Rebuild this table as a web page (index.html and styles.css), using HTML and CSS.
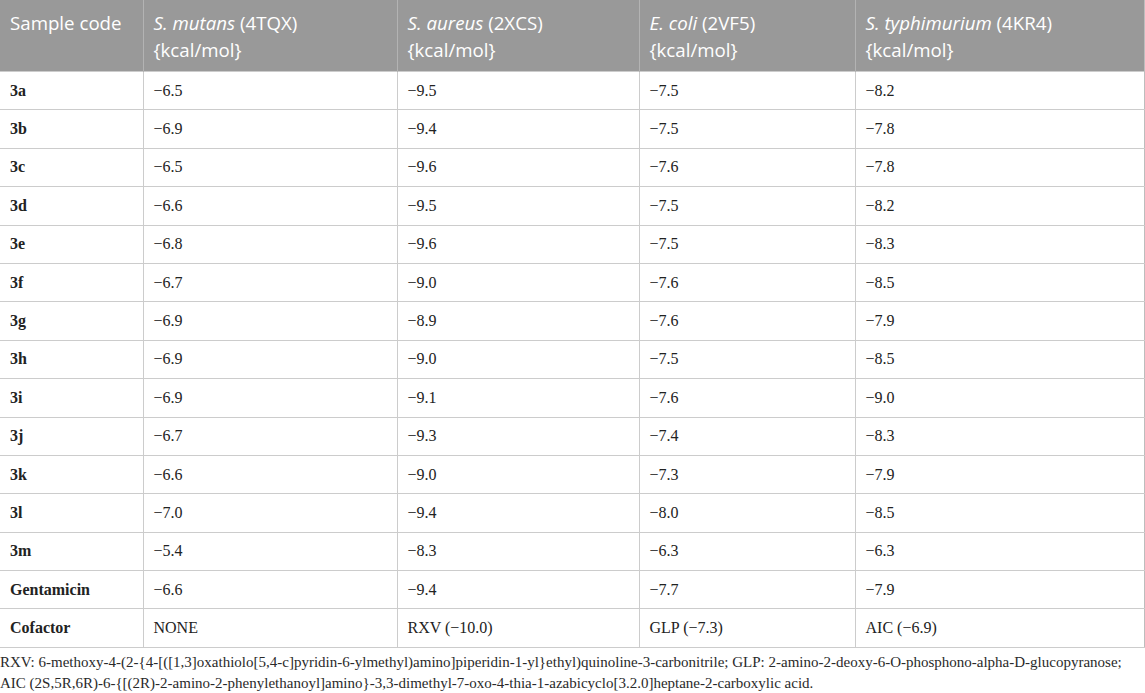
FILE: index.html
```html
<!DOCTYPE html>
<html>
<head>
<meta charset="utf-8">
<link rel="stylesheet" href="styles.css">
</head>
<body>
<div class="wrap">
<table class="data">
<colgroup>
<col class="c1"><col class="c2"><col class="c3"><col class="c4"><col class="c5">
</colgroup>
<thead>
<tr>
<th>Sample code</th>
<th><i>S. mutans</i> (4TQX)<br>{kcal/mol}</th>
<th><i>S. aureus</i> (2XCS)<br>{kcal/mol}</th>
<th><i>E. coli</i> (2VF5)<br>{kcal/mol}</th>
<th><i>S. typhimurium</i> (4KR4)<br>{kcal/mol}</th>
</tr>
</thead>
<tbody>
<tr><td class="k">3a</td><td>−6.5</td><td>−9.5</td><td>−7.5</td><td>−8.2</td></tr>
<tr><td class="k">3b</td><td>−6.9</td><td>−9.4</td><td>−7.5</td><td>−7.8</td></tr>
<tr><td class="k">3c</td><td>−6.5</td><td>−9.6</td><td>−7.6</td><td>−7.8</td></tr>
<tr><td class="k">3d</td><td>−6.6</td><td>−9.5</td><td>−7.5</td><td>−8.2</td></tr>
<tr><td class="k">3e</td><td>−6.8</td><td>−9.6</td><td>−7.5</td><td>−8.3</td></tr>
<tr><td class="k">3f</td><td>−6.7</td><td>−9.0</td><td>−7.6</td><td>−8.5</td></tr>
<tr><td class="k">3g</td><td>−6.9</td><td>−8.9</td><td>−7.6</td><td>−7.9</td></tr>
<tr><td class="k">3h</td><td>−6.9</td><td>−9.0</td><td>−7.5</td><td>−8.5</td></tr>
<tr><td class="k">3i</td><td>−6.9</td><td>−9.1</td><td>−7.6</td><td>−9.0</td></tr>
<tr><td class="k">3j</td><td>−6.7</td><td>−9.3</td><td>−7.4</td><td>−8.3</td></tr>
<tr><td class="k">3k</td><td>−6.6</td><td>−9.0</td><td>−7.3</td><td>−7.9</td></tr>
<tr><td class="k">3l</td><td>−7.0</td><td>−9.4</td><td>−8.0</td><td>−8.5</td></tr>
<tr><td class="k">3m</td><td>−5.4</td><td>−8.3</td><td>−6.3</td><td>−6.3</td></tr>
<tr><td class="k">Gentamicin</td><td>−6.6</td><td>−9.4</td><td>−7.7</td><td>−7.9</td></tr>
<tr><td class="k">Cofactor</td><td>NONE</td><td>RXV (−10.0)</td><td>GLP (−7.3)</td><td>AIC (−6.9)</td></tr>
</tbody>
</table>
<p class="note">RXV: 6-methoxy-4-(2-{4-[([1,3]oxathiolo[5,4-c]pyridin-6-ylmethyl)amino]piperidin-1-yl}ethyl)quinoline-3-carbonitrile; GLP: 2-amino-2-deoxy-6-O-phosphono-alpha-D-glucopyranose;<br>AIC (2S,5R,6R)-6-{[(2R)-2-amino-2-phenylethanoyl]amino}-3,3-dimethyl-7-oxo-4-thia-1-azabicyclo[3.2.0]heptane-2-carboxylic acid.</p>
</div>
</body>
</html>
```

FILE: styles.css
```css
html, body {
  margin: 0;
  padding: 0;
  background: #ffffff;
}
.wrap {
  width: 1145px;
}
.data {
  width: 1144px;
  border-collapse: collapse;
  table-layout: fixed;
}
.c1 { width: 143px; }
.c2 { width: 254px; }
.c3 { width: 242px; }
.c4 { width: 216px; }
.c5 { width: 289px; }
.data th {
  background: #999999;
  color: #ffffff;
  font-family: "Open Sans", sans-serif;
  font-weight: normal;
  font-size: 18.7px;
  line-height: 27px;
  text-align: left;
  vertical-align: top;
  padding: 9px 10px 8px 10px;
  height: 54px;
  border-left: 1px solid #b3b3b3;
  border-right: 1px solid #b3b3b3;
}
.data th:first-child { border-left: none; }
.data th:last-child { border-right: 1px solid #bdbdbd; }
.data td {
  font-family: "Liberation Serif", serif;
  font-size: 16px;
  color: #222222;
  height: 38.4px;
  padding: 0 10px;
  border: 1px solid #cccccc;
  vertical-align: middle;
  box-sizing: border-box;
}
.data td:first-child { border-left: none; }
.data td:last-child { border-right: 1px solid #bdbdbd; }
.data td.k { font-weight: bold; }
.note {
  margin: 0;
  padding: 4px 0 0 0;
  font-family: "Liberation Serif", serif;
  font-size: 15px;
  line-height: 21px;
  color: #2a2a2a;
  white-space: nowrap;
}
```
